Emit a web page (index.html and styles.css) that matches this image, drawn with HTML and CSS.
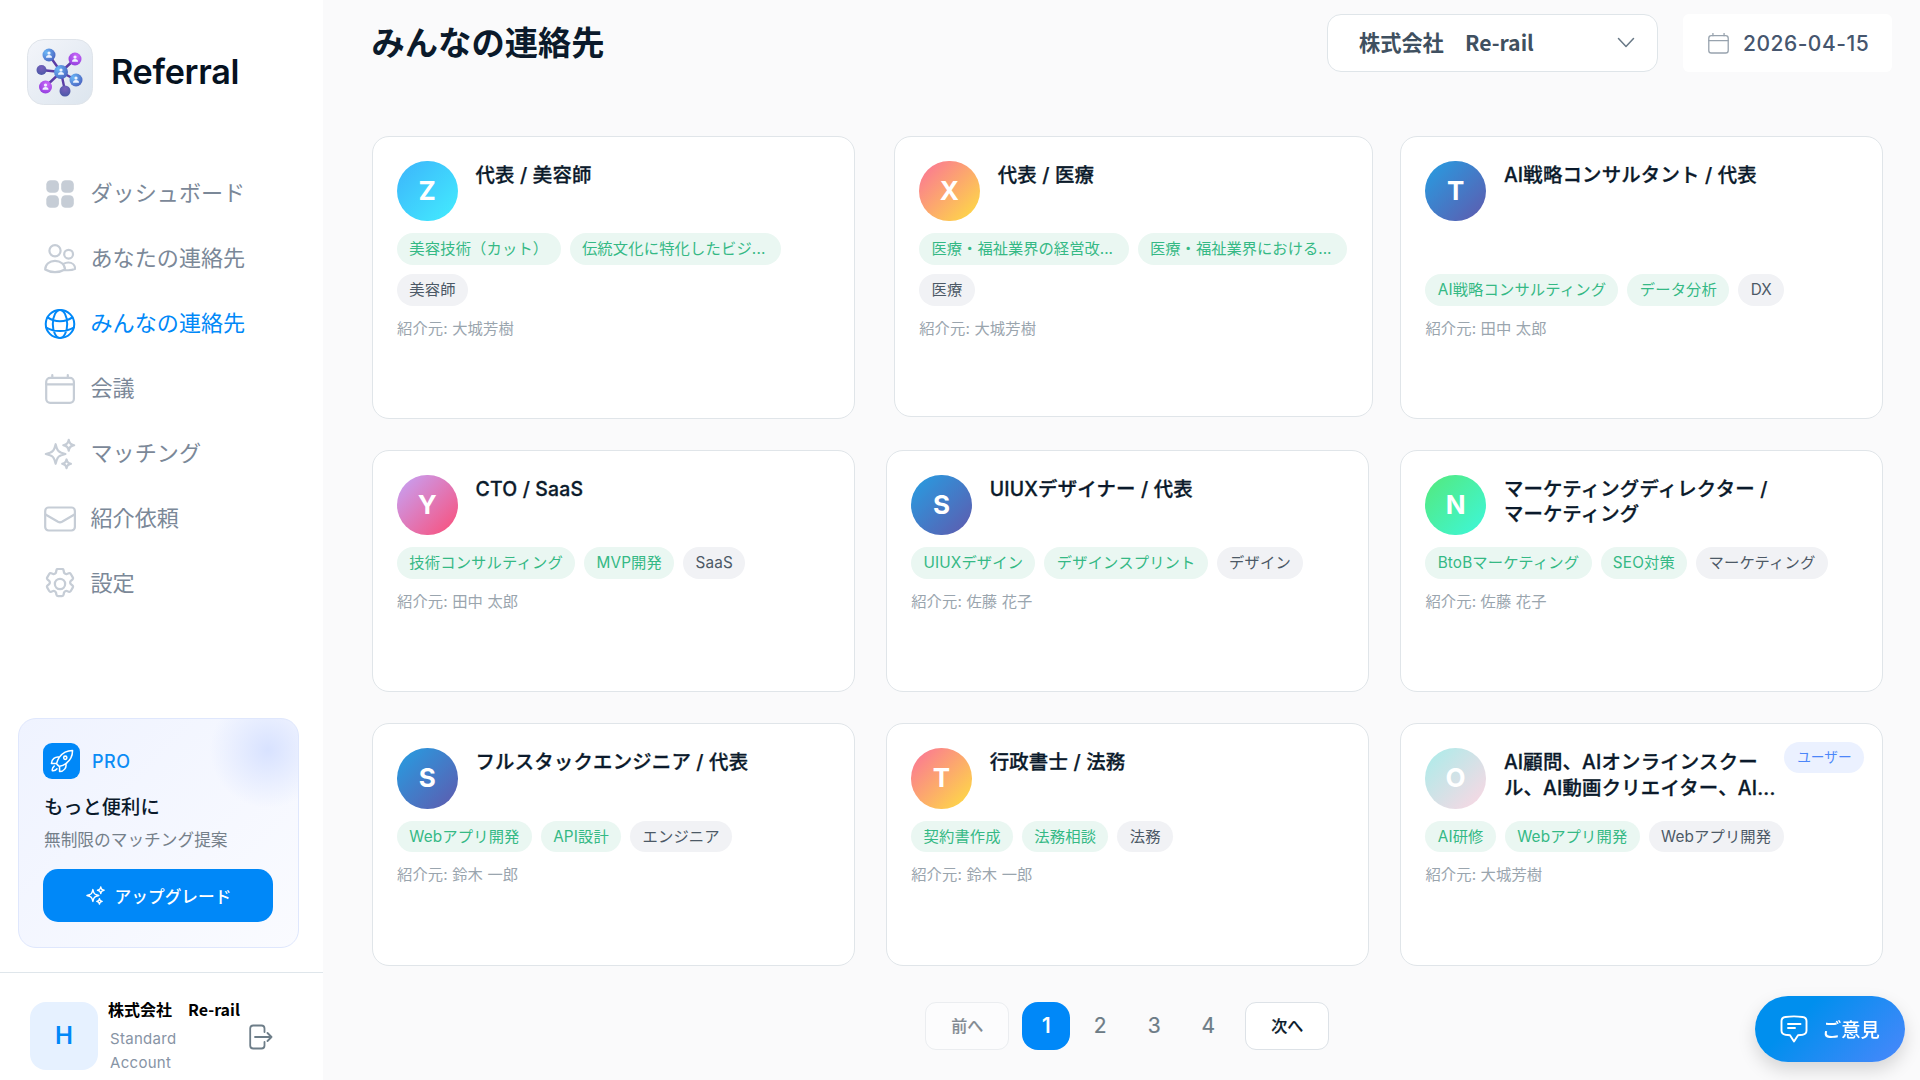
FILE: index.html
```html
<!DOCTYPE html>
<html lang="ja">
<head>
	<title>みんなの連絡先 | Referral</title>
	<meta charset="utf-8"/>
	<link rel="stylesheet" href="styles.css">
</head>
<body>

<div class="sidebar">
	<div class="brand">
		<svg class="logo" viewBox="0 0 66 66">
			<defs>
				<linearGradient id="tile" x1="0" y1="0" x2="1" y2="1"><stop offset="0" stop-color="#f3f5fa"/><stop offset="1" stop-color="#dce5ee"/></linearGradient>
				<radialGradient id="blue" cx=".3" cy=".3" r=".8"><stop offset="0" stop-color="#6ab7f7"/><stop offset="1" stop-color="#4a63c0"/></radialGradient>
				<radialGradient id="pink" cx=".6" cy=".3" r=".8"><stop offset="0" stop-color="#cd6bfa"/><stop offset="1" stop-color="#8d3bdc"/></radialGradient>
				<radialGradient id="navy" cx=".5" cy=".3" r=".8"><stop offset="0" stop-color="#7a60bd"/><stop offset="1" stop-color="#4357a3"/></radialGradient>
				<g id="man"><circle cy="-1.9" r="1.6"/><path d="M-3 2.8c0-1.9 1.2-2.8 3-2.8s3 .9 3 2.8z"/></g>
			</defs>
			<rect x=".5" y=".5" width="65" height="65" rx="16" fill="url(#tile)" stroke="#dfe4ea"/>
			<path d="M34 33L22 16M34 33L48 20M34 33L14 31M34 33L18 48M34 33L38 52M34 33L49 41" stroke="#5b3da6" stroke-width="2.4"/>
			<circle cx="22" cy="16" r="6.5" fill="url(#blue)"/><circle cx="48" cy="20" r="6.5" fill="url(#pink)"/>
			<circle cx="14.5" cy="31" r="5" fill="url(#navy)"/><circle cx="18.5" cy="48" r="6.5" fill="url(#pink)"/>
			<circle cx="38" cy="52" r="5.5" fill="url(#navy)"/><circle cx="49" cy="41" r="6.5" fill="url(#blue)"/>
			<circle cx="34" cy="33" r="7" fill="url(#blue)"/>
			<g fill="#eef4ff"><use href="#man" x="22" y="16"/><use href="#man" x="48" y="20"/><use href="#man" x="18.5" y="48"/><use href="#man" x="49" y="41"/><use href="#man" x="34" y="33"/></g>
		</svg>
		<span>Referral</span>
	</div>

	<ul class="nav">
		<li>
			<svg viewBox="0 0 32 32" class="fill"><rect x="2.3" y="2.2" width="12.6" height="12.6" rx="4.3"/><rect x="17.2" y="2.2" width="12.6" height="12.6" rx="4.3"/><rect x="2.3" y="17.2" width="12.6" height="12.6" rx="4.3"/><rect x="17.2" y="17.2" width="12.6" height="12.6" rx="4.3"/></svg>
			ダッシュボード
		</li>
		<li>
			<svg viewBox="0 0 32 32"><circle cx="11" cy="7.7" r="5.6"/><circle cx="24.6" cy="11.2" r="4.4"/><path d="M1.2 26.5C1.2 21.500 5.500 17.800 11 17.800s10 3.700 10 8.700c-3 1.800-6.300 2.600-10 2.600s-6.900-.8-9.800-2.600zM19.500 20.900c1.400-.9 3-1.400 4.800-1.400 3.800 0 6.700 2.700 6.900 6.300-2.500 1.300-6.200 1.700-10.200 1.300"/></svg>
			あなたの連絡先
		</li>
		<li class="active">
			<svg viewBox="0 0 24 24"><path d="M12 22.500C18 22.500 22.700 17.800 22.700 12S18 1.500 12 1.500 1.300 6.200 1.300 12 6 22.500 12 22.500z"/><path d="M12 22.500c3 0 5.400-4.700 5.400-10.500S15 1.500 12 1.500 6.600 6.200 6.600 12 9 22.500 12 22.500zM2.700 7c2.600 1.900 5.800 2.900 9.300 2.900s6.700-1 9.300-2.900M1.700 14.700c3.100 1.700 6.600 2.600 10.300 2.600s7.200-.9 10.300-2.600"/></svg>
			みんなの連絡先
		</li>
		<li>
			<svg viewBox="0 0 32 32"><rect x="2.2" y="4.8" width="27.7" height="25" rx="4"/><path d="M2.200 11.300h27.700M8.300 4.500V2M23.800 4.500V2"/></svg>
			会議
		</li>
		<li>
			<svg viewBox="1 1 22 22"><use href="#sparkles"/></svg>
			マッチング
		</li>
		<li>
			<svg viewBox="0 0 32 32"><rect x="1.2" y="4.5" width="29.7" height="23" rx="3.5"/><path d="M1.500 11.500l12.500 7.300q2 1 4 0l12.500-7.300"/></svg>
			紹介依頼
		</li>
		<li>
			<svg viewBox="1.4 1.4 21.2 21.2"><path d="M9.594 2.940c.09-.542.560-.940 1.110-.940h2.593c.550 0 1.020.398 1.110.940l.213 1.281c.063.374.313.686.645.870.074.040.147.083.220.127.325.196.720.257 1.075.124l1.217-.456a1.125 1.125 0 0 1 1.370.490l1.296 2.247a1.125 1.125 0 0 1-.260 1.431l-1.003.827c-.293.241-.438.613-.430.992a7.723 7.723 0 0 1 0 .255c-.008.378.137.750.430.991l1.004.827c.424.350.534.955.260 1.430l-1.298 2.247a1.125 1.125 0 0 1-1.369.491l-1.217-.456c-.355-.133-.750-.072-1.076.124a6.470 6.470 0 0 1-.220.128c-.331.183-.581.495-.644.869l-.213 1.281c-.090.543-.560.940-1.110.940h-2.594c-.550 0-1.019-.398-1.110-.940l-.213-1.281c-.062-.374-.312-.686-.644-.870a6.520 6.520 0 0 1-.220-.127c-.325-.196-.720-.257-1.076-.124l-1.217.456a1.125 1.125 0 0 1-1.369-.490l-1.297-2.247a1.125 1.125 0 0 1 .260-1.431l1.004-.827c.292-.240.437-.613.430-.991a6.932 6.932 0 0 1 0-.255c.007-.380-.138-.751-.430-.992l-1.004-.827a1.125 1.125 0 0 1-.260-1.430l1.297-2.247a1.125 1.125 0 0 1 1.370-.491l1.216.456c.356.133.751.072 1.076-.124.072-.044.146-.086.220-.128.332-.183.582-.495.644-.869l.214-1.280z"/><circle cx="12" cy="12" r="3.4"/></svg>
			設定
		</li>
	</ul>

	<div class="pro">
		<div class="pro-head">
			<span class="rocket"><svg viewBox="0 0 24 24"><path d="M15.590 14.370a6 6 0 0 1-5.840 7.380v-4.800m5.840-2.580a14.980 14.980 0 0 0 6.160-12.120A14.980 14.980 0 0 0 9.631 8.410m5.960 5.960a14.926 14.926 0 0 1-5.841 2.580m-.119-8.540a6 6 0 0 0-7.381 5.840h4.800m2.581-5.840a14.927 14.927 0 0 0-2.580 5.840m2.699 2.700a15.530 15.530 0 0 1-.311.060 15.090 15.090 0 0 1-2.448-2.448 14.900 14.900 0 0 1 .060-.312m-2.240 2.390a4.493 4.493 0 0 0-1.757 4.306 4.493 4.493 0 0 0 4.306-1.758M16.500 9a1.500 1.500 0 1 1-3 0 1.500 1.500 0 0 1 3 0z"/></svg></span>
			PRO
		</div>
		<h3>もっと便利に</h3>
		<p>無制限のマッチング提案</p>
		<button>
			<svg viewBox="0 0 24 24"><path id="sparkles" d="M9.813 15.904L9 18.750l-.813-2.846a4.500 4.500 0 0 0-3.090-3.090L2.250 12l2.846-.813a4.500 4.500 0 0 0 3.090-3.090L9 5.250l.813 2.846a4.500 4.500 0 0 0 3.090 3.090L15.750 12l-2.846.813a4.500 4.500 0 0 0-3.090 3.090zM18.259 8.715L18 9.750l-.259-1.035a3.375 3.375 0 0 0-2.455-2.456L14.250 6l1.036-.259a3.375 3.375 0 0 0 2.455-2.456L18 2.250l.259 1.035a3.375 3.375 0 0 0 2.456 2.456L21.750 6l-1.035.259a3.375 3.375 0 0 0-2.456 2.456zM16.894 20.567L16.500 21.750l-.394-1.183a2.250 2.250 0 0 0-1.423-1.423L13.500 18.750l1.183-.394a2.250 2.250 0 0 0 1.423-1.423l.394-1.183.394 1.183a2.250 2.250 0 0 0 1.423 1.423l1.183.394-1.183.394a2.250 2.250 0 0 0-1.423 1.423z"/></svg>
			アップグレード
		</button>
	</div>

	<div class="account">
		<span class="face">H</span>
		<div class="who">
			<b>株式会社　Re-rail</b>
			<span>Standard Account</span>
		</div>
		<svg class="logout" viewBox="0 0 24 26"><path d="M15.500 8V4.500q0-3-3-3H4.200q-3 0-3 3v17q0 3 3 3h8.300q3 0 3-3V18M6 13h16.500M18.500 9l4 4-4 4"/></svg>
	</div>
</div>

<div class="main">
	<div class="topbar">
		<h1>みんなの連絡先</h1>
		<div class="select">
			株式会社　Re-rail
			<svg viewBox="0 0 18 12"><path d="M1.500 1.500L9 9.500l7.500-8"/></svg>
		</div>
		<div class="date">
			<svg viewBox="0 0 32 32"><rect x="1.2" y="4" width="29.6" height="26.5" rx="4"/><path d="M1.200 11.500h29.600M7.500 4V0.500M24.500 4V0.500"/></svg>
			2026-04-15
		</div>
	</div>

	<div class="grid">
		<div class="card tall">
			<div class="head"><span class="avatar sky">Z</span><h2>代表 / 美容師</h2></div>
			<div class="tags"><span>美容技術（カット）</span><span class="cut">伝統文化に特化したビジ...</span><span class="gray">美容師</span></div>
			<p>紹介元: 大城芳樹</p>
		</div>
		<div class="card tall pressed">
			<div class="head"><span class="avatar sunset">X</span><h2>代表 / 医療</h2></div>
			<div class="tags"><span class="cut">医療・福祉業界の経営改...</span><span class="cut">医療・福祉業界における...</span><span class="gray">医療</span></div>
			<p>紹介元: 大城芳樹</p>
		</div>
		<div class="card tall">
			<div class="head"><span class="avatar ocean">T</span><h2>AI戦略コンサルタント / 代表</h2></div>
			<div class="tags"><span>AI戦略コンサルティング</span><span>データ分析</span><span class="gray">DX</span></div>
			<p>紹介元: 田中 太郎</p>
		</div>

		<div class="card">
			<div class="head"><span class="avatar candy">Y</span><h2>CTO / SaaS</h2></div>
			<div class="tags"><span>技術コンサルティング</span><span>MVP開発</span><span class="gray">SaaS</span></div>
			<p>紹介元: 田中 太郎</p>
		</div>
		<div class="card">
			<div class="head"><span class="avatar ocean">S</span><h2>UIUXデザイナー / 代表</h2></div>
			<div class="tags"><span>UIUXデザイン</span><span>デザインスプリント</span><span class="gray">デザイン</span></div>
			<p>紹介元: 佐藤 花子</p>
		</div>
		<div class="card">
			<div class="head"><span class="avatar mint">N</span><h2>マーケティングディレクター /<br>マーケティング</h2></div>
			<div class="tags"><span>BtoBマーケティング</span><span>SEO対策</span><span class="gray">マーケティング</span></div>
			<p>紹介元: 佐藤 花子</p>
		</div>

		<div class="card">
			<div class="head"><span class="avatar ocean">S</span><h2>フルスタックエンジニア / 代表</h2></div>
			<div class="tags"><span>Webアプリ開発</span><span>API設計</span><span class="gray">エンジニア</span></div>
			<p>紹介元: 鈴木 一郎</p>
		</div>
		<div class="card">
			<div class="head"><span class="avatar sunset">T</span><h2>行政書士 / 法務</h2></div>
			<div class="tags"><span>契約書作成</span><span>法務相談</span><span class="gray">法務</span></div>
			<p>紹介元: 鈴木 一郎</p>
		</div>
		<div class="card">
			<div class="head"><span class="avatar pale">O</span><h2>AI顧問、AIオンラインスクー<br>ル、AI動画クリエイター、AI...</h2></div>
			<div class="tags"><span>AI研修</span><span>Webアプリ開発</span><span class="gray">Webアプリ開発</span></div>
			<p>紹介元: 大城芳樹</p>
			<span class="badge">ユーザー</span>
		</div>
	</div>

	<div class="pager">
		<a class="box off">前へ</a>
		<a class="current">1</a><a>2</a><a>3</a><a>4</a>
		<a class="box">次へ</a>
	</div>
</div>

<div class="feedback">
	<svg viewBox="0 0 28 28"><path d="M5.500 2Q14 .8 22.500 2q4 .6 4 4v9.500q0 3.600-4 4.200l-4.500.5-4 6.300-4-6.300-4.500-.5q-4-.6-4-4.200V6q0-3.400 4-4zM8 9h12.500M8 13h7"/></svg>
	ご意見
</div>

</body>
</html>
```
FILE: styles.css
```css
* {
	margin: 0px;
	padding: 0px;
	box-sizing: border-box;
}

body {
	display: flex;
	height: 1080px;
	overflow: hidden;
	background-color: #fafafb;
	font-family: Inter, "Noto Sans CJK JP", sans-serif;
	color: #0b1a2b;
}
svg {
	flex: none;
	fill: none;
	stroke: currentColor;
	stroke-width: 2;
	stroke-linecap: round;
	stroke-linejoin: round;
}

/* サイドバー */
.sidebar {
	display: flex;
	flex-direction: column;
	width: 323px;
	height: 1080px;
	background-color: white;
}
.brand {
	display: flex;
	align-items: center;
	gap: 18px;
	padding: 39px 0 0 27px;
	font-size: 34.2px;
	font-weight: 600;
	line-height: 66px;
	letter-spacing: -0.3px;
	color: #06121f;
}
	.logo {
		width: 66px;
		height: 66px;
		stroke: none;
		stroke-width: 1;
	}
.nav {
	margin-top: 56px;
	padding-left: 44px;
	list-style: none;
}
	.nav li {
		display: flex;
		align-items: center;
		gap: 14.5px;
		height: 65px;
		padding-bottom: 6px;
		font-size: 22.1px;
		color: #7b8898;
	}
	.nav svg {
		width: 32px;
		height: 32px;
		margin-top: 6px;
		stroke-width: 2.2;
		color: #c6cdd6;
	}
	.nav svg:not([viewBox="0 0 32 32"]) {
		stroke-width: 1.5;
	}
	.nav .fill {
		fill: currentColor;
		stroke: none;
	}
	.nav .active, .nav .active svg {
		color: #0088f8;
	}
.pro {
	width: 281px;
	height: 230px;
	margin: 102px 0 0 18px;
	padding: 24px;
	border: 1px solid #dfe7fd;
	border-radius: 18px;
	background: radial-gradient(circle at 249px 31px, #d8e2ff 0, rgba(216, 226, 255, 0) 58px), linear-gradient(135deg, #eff3ff, #fafbff);
}
	.pro-head {
		display: flex;
		align-items: center;
		gap: 12px;
		font-size: 18px;
		font-weight: 500;
		letter-spacing: 0.5px;
		color: #0c8cf5;
	}
	.rocket {
		display: flex;
		align-items: center;
		justify-content: center;
		width: 37px;
		height: 36px;
		border-radius: 9px;
		background-color: #0088f8;
		color: white;
	}
	.rocket svg {
		width: 26px;
		height: 26px;
		stroke-width: 1.4;
	}
	.pro h3 {
		margin-top: 13px;
		padding-left: 1px;
		font-size: 19.3px;
		font-weight: 500;
		line-height: 30px;
	}
	.pro p {
		margin-top: 5px;
		padding-left: 1px;
		font-size: 16.7px;
		line-height: 26px;
		color: #75808a;
	}
	.pro button {
		display: flex;
		align-items: center;
		justify-content: center;
		gap: 9px;
		width: 230px;
		height: 53px;
		margin-top: 16px;
		border: 0;
		border-radius: 15px;
		background-color: #0088f8;
		color: white;
		font: 500 16.7px Inter, "Noto Sans CJK JP", sans-serif;
	}
	.pro button svg {
		width: 21px;
		height: 21px;
		stroke-width: 1.7;
	}
.account {
	display: flex;
	margin-top: 24px;
	padding: 29px 0 0 30px;
	height: 108px;
	border-top: 1px solid #dfe6eb;
}
	.face {
		width: 68px;
		height: 68px;
		border-radius: 16px;
		background-color: #e6f1ff;
		color: #0088f8;
		font-size: 24px;
		font-weight: 600;
		line-height: 68px;
		text-align: center;
	}
	.who {
		width: 142px;
		padding-left: 10px;
	}
	.who b {
		display: block;
		font: 700 16px "Noto Sans CJK JP", sans-serif;
		line-height: 24px;
		margin-top: -5px;
		color: black;
		white-space: nowrap;
	}
	.who span {
		display: block;
		width: 90px;
		margin-top: 6px;
		padding-left: 2px;
		font-size: 15px;
		line-height: 24px;
		letter-spacing: 0.3px;
		color: #8794a5;
	}
	.logout {
		width: 24px;
		height: 26px;
		margin: 22px 0 0 9px;
		stroke-width: 1.8;
		color: #6d7d88;
	}

/* メイン */
.main {
	width: 1597px;
	padding: 14px 28px 0 48.5px;
}
.topbar {
	display: flex;
	height: 58px;
	line-height: 58px;
}
	.topbar h1 {
		flex: 1;
		font-size: 33.3px;
		font-weight: 600;
	}
	.select {
		display: flex;
		align-items: center;
		justify-content: space-between;
		width: 331px;
		padding: 0 22px 0 31px;
		border: 1px solid #dfe5e9;
		border-radius: 14px;
		background-color: white;
		font: 700 21.2px "Noto Sans CJK JP", sans-serif;
		line-height: 53px;
		padding-bottom: 3px;
		color: #3f5060;
	}
	.select svg {
		width: 18px;
		height: 12px;
		margin-top: 3px;
		stroke-width: 1.5;
		color: #687886;
	}
	.date {
		display: flex;
		align-items: center;
		gap: 14px;
		width: 209px;
		margin-left: 25px;
		padding-left: 25px;
		padding-top: 1px;
		border-radius: 6px;
		background-color: white;
		font-size: 21px;
		font-weight: 500;
		letter-spacing: 0.5px;
		color: #46566e;
	}
	.date svg {
		width: 21px;
		height: 21px;
		color: #98a3ae;
	}
.grid {
	display: grid;
	grid-template-columns: repeat(3, 483.5px);
	grid-template-rows: 283px 242.5px 242.5px;
	gap: 31px 30.7px;
	margin-top: 63.5px;
}
.card {
	position: relative;
	padding: 24px 24.5px;
	border: 1px solid #e0e5e9;
	border-radius: 17px;
	background-color: white;
}
.pressed {
	width: 479.5px;
	height: 281.5px;
	margin-left: 8px;
}
	.head {
		display: flex;
		gap: 18px;
		height: 60.5px;
	}
	.avatar {
		width: 60.5px;
		height: 60.5px;
		border-radius: 50%;
		color: white;
		font-size: 26px;
		font-weight: 700;
		line-height: 60px;
		text-align: center;
	}
	.sky { background: linear-gradient(135deg, #3cb4fb, #43edfe); }
	.sunset { background: linear-gradient(135deg, #fa709a, #fee140); }
	.ocean { background: linear-gradient(135deg, #259fe3, #6059ad); }
	.candy { background: linear-gradient(135deg, #c4a5fa, #fb4d77); }
	.mint { background: linear-gradient(135deg, #54e97b, #3df7dc); }
	.pale { background: linear-gradient(135deg, #a8edea, #fed6e3); }
	.head h2 {
		margin-top: 2px;
		font-size: 19.4px;
		font-weight: 500;
		line-height: 25.8px;
		letter-spacing: 0.2px;
		white-space: nowrap;
		-webkit-text-stroke: 0.3px;
	}
	.tags {
		display: flex;
		flex-wrap: wrap;
		align-content: flex-end;
		gap: 9px;
		margin-top: 12px;
	}
	.tall .tags {
		height: 72.5px;
	}
	.tags span {
		height: 31.7px;
		padding: 0 12.3px;
		border-radius: 16px;
		background-color: #eaf7f2;
		color: #35b985;
		font-size: 15.3px;
		line-height: 32.5px;
		letter-spacing: 0.15px;
		white-space: nowrap;
	}
	.tags .cut {
		width: 211.5px;
	}
	.pressed .tags .cut {
		width: 209.5px;
		letter-spacing: 0;
	}
	.tags .gray {
		background-color: #f1f2f5;
		color: #4c5966;
	}
	.card p {
		margin-top: 10px;
		font-size: 15.3px;
		line-height: 25px;
		letter-spacing: 0.12px;
		color: #9aa5ae;
	}
	.badge {
		position: absolute;
		top: 18px;
		right: 18px;
		width: 80px;
		height: 31px;
		border-radius: 16px;
		background-color: #ebf1ff;
		color: #4c86f9;
		font-size: 13.7px;
		line-height: 31px;
		text-align: center;
	}

.pager {
	display: flex;
	justify-content: center;
	align-items: center;
	gap: 6px;
	margin: 36px 9px 0 0;
}
	.pager a {
		width: 48px;
		height: 48px;
		border-radius: 16px;
		font-size: 21px;
		line-height: 48px;
		text-align: center;
		color: #6d7c86;
		-webkit-text-stroke: 0.2px;
	}
	.pager .current {
		background-color: #0088f8;
		color: white;
		font-weight: 500;
	}
	.pager .box {
		width: 84px;
		margin: 0 7px;
		border: 1px solid #dde2e7;
		border-radius: 11px;
		background-color: white;
		font-size: 16px;
		font-weight: 500;
		line-height: 46px;
		color: #0b1a2b;
	}
	.pager .off {
		opacity: 0.5;
	}

/* 右下に浮かぶボタン */
.feedback {
	position: fixed;
	right: 15px;
	bottom: 18px;
	display: flex;
	align-items: center;
	gap: 14px;
	width: 150px;
	height: 66px;
	padding-left: 25px;
	border-radius: 33px;
	background: linear-gradient(135deg, #008fee 30%, #4b87fb);
	box-shadow: 0 8px 18px rgba(0, 0, 0, 0.15);
	color: white;
	font-size: 19.3px;
	font-weight: 500;
}
	.feedback svg {
		width: 28px;
		height: 28px;
		stroke-width: 1.9;
	}
```
